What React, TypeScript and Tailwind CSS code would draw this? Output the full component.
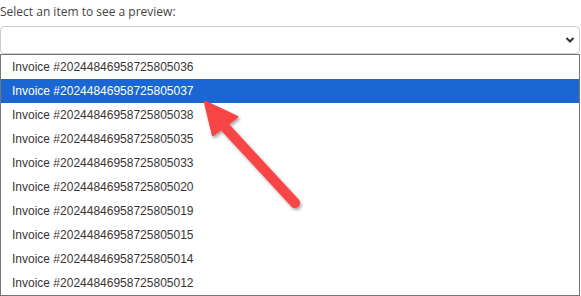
import React from "react";

const items = [
  "Invoice #20244846958725805036",
  "Invoice #20244846958725805037",
  "Invoice #20244846958725805038",
  "Invoice #20244846958725805035",
  "Invoice #20244846958725805033",
  "Invoice #20244846958725805020",
  "Invoice #20244846958725805019",
  "Invoice #20244846958725805015",
  "Invoice #20244846958725805014",
  "Invoice #20244846958725805012",
];

export default function App() {
  return (
    <div className="relative w-[581px] h-[296px] bg-white overflow-hidden">
      <div
        className="h-[26px] pt-[3px] text-[12px] leading-[17px] text-[#444]"
        style={{ fontFamily: '"Open Sans", sans-serif' }}
      >
        Select an item to see a preview:
      </div>
      <div className="h-[28px] w-[580px] border border-[#ccc] rounded-[4px] flex items-center justify-end pr-[4px]">
        <svg width="10" height="8" viewBox="0 0 10 8">
          <path d="M1.5 2 L5 5.5 L8.5 2" fill="none" stroke="#333" strokeWidth="2" />
        </svg>
      </div>
      <div
        className="w-[580px] border border-[#767676] text-[12px]"
        style={{ fontFamily: '"Liberation Sans", Arial, sans-serif' }}
      >
        {items.map((t, i) => (
          <div
            key={t}
            className={
              i === 1
                ? "h-[24px] flex items-center pl-[11px] bg-[#1a66d2] text-white"
                : "h-[24px] flex items-center pl-[11px] text-[#3a3535]"
            }
          >
            {t}
          </div>
        ))}
      </div>
      <svg
        className="absolute left-0 top-0 pointer-events-none"
        width="581"
        height="296"
        viewBox="0 0 581 296"
      >
        <defs>
          <filter id="sh" x="-20%" y="-20%" width="140%" height="140%">
            <feDropShadow dx="1.5" dy="2" stdDeviation="1.5" floodColor="#000" floodOpacity="0.35" />
          </filter>
        </defs>
        <g filter="url(#sh)">
          <line x1="222" y1="124" x2="295" y2="203" stroke="#f84444" strokeWidth="10" strokeLinecap="round" />
          <polygon points="205,102 237,117 213,135" fill="#f84444" stroke="#f84444" strokeWidth="2.5" strokeLinejoin="round" />
        </g>
      </svg>
    </div>
  );
}
